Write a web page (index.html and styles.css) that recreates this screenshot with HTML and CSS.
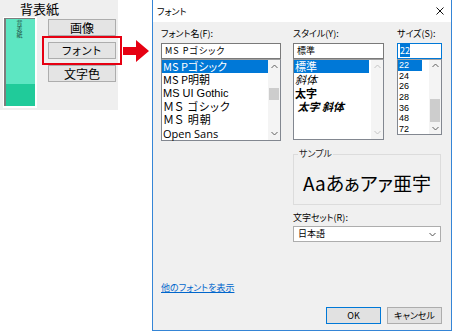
FILE: index.html
```html
<!DOCTYPE html>
<html lang="ja">
  <head>
    <meta charset="UTF-8" />
    <title>フォント</title>
    <link rel="stylesheet" href="styles.css">
  </head>
  <body>
    <div class="stage">
      <div class="panel">
        <div class="panel-title">背表紙</div>
        <div class="panel-main">
          <div class="spine"><span class="spine-text">背表紙</span></div>
          <div class="panel-buttons">
            <div class="pbtn">画像</div>
            <div class="pbtn marked">フォント</div>
            <div class="pbtn">文字色</div>
          </div>
        </div>
      </div>

      <div class="arrow-col">
        <svg width="26" height="22" viewBox="0 0 26 22">
          <polygon points="0,7 13,7 13,0 26,11 13,22 13,15 0,15" fill="#e60012" />
        </svg>
      </div>

      <div class="dlg">
        <div class="titlebar">
          <span class="title">フォント</span>
          <svg class="close" width="8" height="8" viewBox="0 0 8 8">
            <path d="M0.5 0.5 L7.5 7.5 M7.5 0.5 L0.5 7.5" stroke="#111" stroke-width="1" />
          </svg>
        </div>

        <div class="dlg-body">
          <div class="cols">
            <div class="col col-name">
              <div class="lbl">フォント名(F):</div>
              <div class="field field-name">MS Pゴシック</div>
              <div class="listbox list-name">
                <div class="items">
                  <div class="item sel">MS Pゴシック</div>
                  <div class="item">MS P明朝</div>
                  <div class="item latin">MS UI Gothic</div>
                  <div class="item wide">ＭＳ ゴシック</div>
                  <div class="item wide">ＭＳ 明朝</div>
                  <div class="item open">Open Sans</div>
                </div>
                <div class="vscroll">
                  <div class="sb-btn">
                    <svg width="7" height="5" viewBox="0 0 7 5"><polyline points="0.5,4 3.5,1 6.5,4" fill="none" stroke="#606060" /></svg>
                  </div>
                  <div class="track"><div class="thumb thumb-name"></div></div>
                  <div class="sb-btn">
                    <svg width="7" height="5" viewBox="0 0 7 5"><polyline points="0.5,1 3.5,4 6.5,1" fill="none" stroke="#606060" /></svg>
                  </div>
                </div>
              </div>
            </div>

            <div class="col col-style">
              <div class="lbl">スタイル(Y):</div>
              <div class="field">標準</div>
              <div class="listbox list-style">
                <div class="items">
                  <div class="item sel">標準</div>
                  <div class="item italic">斜体</div>
                  <div class="item bold">太字</div>
                  <div class="item bold italic">&nbsp;太字 斜体</div>
                </div>
                <div class="vscroll">
                  <div class="sb-btn">
                    <svg width="7" height="5" viewBox="0 0 7 5"><polyline points="0.5,4 3.5,1 6.5,4" fill="none" stroke="#c4c4c4" /></svg>
                  </div>
                  <div class="track"></div>
                  <div class="sb-btn">
                    <svg width="7" height="5" viewBox="0 0 7 5"><polyline points="0.5,1 3.5,4 6.5,1" fill="none" stroke="#c4c4c4" /></svg>
                  </div>
                </div>
              </div>
            </div>

            <div class="col col-size">
              <div class="lbl">サイズ(S):</div>
              <div class="field focus"><span class="picked">22</span></div>
              <div class="listbox list-size">
                <div class="items">
                  <div class="item"><span class="sel">22</span></div>
                  <div class="item">24</div>
                  <div class="item">26</div>
                  <div class="item">28</div>
                  <div class="item">36</div>
                  <div class="item">48</div>
                  <div class="item">72</div>
                </div>
                <div class="vscroll">
                  <div class="sb-btn small">
                    <svg width="7" height="5" viewBox="0 0 7 5"><polyline points="0.5,4 3.5,1 6.5,4" fill="none" stroke="#606060" /></svg>
                  </div>
                  <div class="track"><div class="thumb thumb-size"></div></div>
                  <div class="sb-btn small">
                    <svg width="7" height="5" viewBox="0 0 7 5"><polyline points="0.5,1 3.5,4 6.5,1" fill="none" stroke="#606060" /></svg>
                  </div>
                </div>
              </div>
            </div>
          </div>

          <div class="lower">
            <fieldset class="sample">
              <legend>サンプル</legend>
              <div class="sample-text">Aaあぁアァ亜宇</div>
            </fieldset>
            <div class="lbl charset-lbl">文字セット(R):</div>
            <div class="combo">
              <span>日本語</span>
              <svg width="7" height="5" viewBox="0 0 7 5"><polyline points="0.5,1 3.5,4 6.5,1" fill="none" stroke="#555" /></svg>
            </div>
          </div>

          <a class="more-link" href="#">他のフォントを表示</a>

          <div class="btn-row">
            <button class="btn default">OK</button>
            <button class="btn">キャンセル</button>
          </div>
        </div>
      </div>
    </div>
  </body>
</html>
```

FILE: styles.css
```css
body {
  margin: 0;
  background-color: #fff;
  font-family: "Noto Sans CJK JP", "Liberation Sans", sans-serif;
  font-feature-settings: "palt";
  color: #000;
}
.stage {
  display: flex;
  align-items: flex-start;
  width: 452px;
  height: 332px;
  overflow: hidden;
}

/* left panel */
.panel {
  width: 118px;
  height: 110px;
  background-color: #efefef;
}
.panel-title {
  height: 17px;
  padding-left: 20px;
  font-size: 13px;
  line-height: 17px;
}
.panel-main {
  display: flex;
  align-items: flex-start;
}
.spine {
  width: 31px;
  height: 88px;
  margin-left: 3px;
  border-style: solid;
  border-color: #fff;
  border-width: 1px 2px 2px 1px;
  background: linear-gradient(#5de6c2 0, #5de6c2 66px, #20cb9a 66px);
  box-shadow: inset 2px 1px 0 #7d7d7d;
  display: flex;
  justify-content: center;
}
.spine-text {
  writing-mode: vertical-rl;
  font-size: 6px;
  line-height: 7px;
  margin-top: 2px;
  color: #1f4d40;
}
.panel-buttons {
  display: flex;
  flex-direction: column;
  gap: 6px;
  margin-left: 11px;
  padding-top: 2px;
}
.pbtn {
  width: 66px;
  height: 15px;
  border: 1px solid #adadad;
  background-color: #e4e4e4;
  font-size: 12px;
  line-height: 15px;
  text-align: center;
}
.marked {
  outline: 2px solid #e60012;
  outline-offset: 4px;
  font-size: 11px;
  letter-spacing: 1px;
}
.arrow-col {
  width: 29px;
  padding-top: 40px;
  padding-left: 5px;
}

/* dialog */
.dlg {
  width: 298px;
  height: 330px;
  border: 1px solid #3585d6;
  border-top: none;
  display: flex;
  flex-direction: column;
}
.titlebar {
  height: 22px;
  background-color: #fff;
  display: flex;
  align-items: center;
  justify-content: space-between;
  padding: 0 7px 0 4px;
}
.title {
  font-size: 9px;
}
.dlg-body {
  flex: 1;
  background-color: #f0f0f0;
  padding: 6px 9px 0 8px;
}
.cols {
  display: flex;
  align-items: flex-start;
}
.col-name {
  width: 120px;
}
.col-style {
  width: 91px;
  margin-left: 12px;
}
.col-size {
  width: 45px;
  margin-left: 13px;
}
.lbl {
  height: 12px;
  margin-bottom: 3px;
  font-size: 9px;
  line-height: 12px;
  white-space: nowrap;
}
.field {
  height: 14px;
  border: 1px solid #7a7a7a;
  background-color: #fff;
  padding-left: 3px;
  font-size: 9px;
  line-height: 14px;
  white-space: nowrap;
}
.field-name {
  letter-spacing: 1px;
}
.field.focus {
  border-color: #0078d7;
  padding-left: 2px;
}
.picked {
  background-color: #0078d7;
  color: #fff;
}
.listbox {
  display: flex;
  border: 1px solid #828790;
  border-top-color: #a0a0a0;
  background-color: #fff;
}
.list-name {
  height: 80px;
}
.list-style {
  height: 79px;
}
.list-size {
  height: 74px;
}
.items {
  flex: 1;
  display: grid;
  align-content: start;
}
.list-name .items {
  grid-auto-rows: 13.33px;
  font-size: 11px;
  line-height: 13px;
}
.list-style .items {
  grid-auto-rows: 13.33px;
  font-size: 11px;
  line-height: 13px;
  margin-right: 2px;
}
.list-size .items {
  grid-auto-rows: 10.57px;
  font-family: "Liberation Sans", sans-serif;
  font-size: 9px;
  line-height: 10px;
}
.item {
  display: flex;
  align-items: center;
  padding-left: 1px;
  white-space: nowrap;
}
.item.sel,
.item .sel {
  background-color: #0078d7;
  color: #fff;
}
.list-size .item .sel {
  width: 23px;
  height: 100%;
  display: flex;
  align-items: center;
  margin-left: -1px;
  padding-left: 1px;
}
.latin {
  font-family: "Liberation Sans", sans-serif;
}
.open {
  font-family: "Open Sans", sans-serif;
}
.wide {
  letter-spacing: 1px;
}
.italic {
  font-style: italic;
}
.bold {
  font-weight: bold;
}
.vscroll {
  width: 12px;
  background-color: #f4f4f4;
  display: flex;
  flex-direction: column;
}
.sb-btn {
  height: 13px;
  display: flex;
  align-items: center;
  justify-content: center;
}
.sb-btn.small {
  height: 11px;
}
.track {
  flex: 1;
}
.thumb {
  margin: 0 1px;
  background-color: #cdcdcd;
}
.thumb-name {
  margin-top: 15px;
  height: 12px;
}
.thumb-size {
  margin-top: 28px;
  height: 23px;
}

/* sample and charset */
.lower {
  margin-left: 132px;
  margin-top: 7px;
  width: 148px;
}
.sample {
  margin: 0;
  padding: 0;
  min-width: 0;
  border: 1px solid #dcdcdc;
}
.sample legend {
  margin-left: 4px;
  padding: 0 1px;
  font-size: 9px;
  line-height: 12px;
  color: #222;
}
.sample-text {
  height: 44px;
  font-size: 19px;
  line-height: 46px;
  text-align: center;
}
.charset-lbl {
  margin-top: 7px;
  margin-bottom: 2px;
}
.combo {
  height: 14px;
  border: 1px solid #adadad;
  background-color: #fff;
  display: flex;
  align-items: center;
  justify-content: space-between;
  padding: 0 4px 0 4px;
  font-size: 9px;
  line-height: 14px;
}
.more-link {
  display: inline-block;
  margin-top: 40px;
  font-size: 9px;
  line-height: 12px;
  color: #0066cc;
}
.btn-row {
  display: flex;
  justify-content: flex-end;
  gap: 6px;
  margin-top: 11px;
}
.btn {
  width: 55px;
  height: 17px;
  padding: 0;
  border: 1px solid #adadad;
  background-color: #e1e1e1;
  font-family: "Noto Sans CJK JP", sans-serif;
  font-feature-settings: "palt";
  font-size: 9px;
  line-height: 15px;
  color: #000;
}
.btn.default {
  border-color: #0078d7;
}
```
